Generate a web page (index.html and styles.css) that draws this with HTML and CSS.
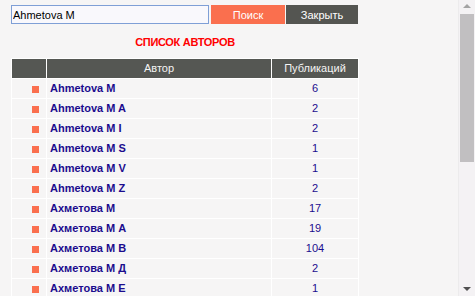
FILE: index.html
```html
<!DOCTYPE html>
<html lang="ru">
<head>
    <meta charset="UTF-8">
    <title>Список авторов</title>
    <link rel="stylesheet" href="styles.css">
</head>
<body>
    <div class="wrap">
        <form class="search">
            <input type="text" class="search-input" value="Ahmetova M" autofocus>
            <button type="button" class="btn btn-find">Поиск</button>
            <button type="button" class="btn btn-close">Закрыть</button>
        </form>

        <div class="title">СПИСОК АВТОРОВ</div>

        <table class="authors">
            <tr>
                <th class="mark"></th>
                <th>Автор</th>
                <th class="num">Публикаций</th>
            </tr>
            <tr><td class="mark"><span class="dot"></span></td><td><a href="#">Ahmetova M</a></td><td class="num">6</td></tr>
            <tr><td class="mark"><span class="dot"></span></td><td><a href="#">Ahmetova M A</a></td><td class="num">2</td></tr>
            <tr><td class="mark"><span class="dot"></span></td><td><a href="#">Ahmetova M I</a></td><td class="num">2</td></tr>
            <tr><td class="mark"><span class="dot"></span></td><td><a href="#">Ahmetova M S</a></td><td class="num">1</td></tr>
            <tr><td class="mark"><span class="dot"></span></td><td><a href="#">Ahmetova M V</a></td><td class="num">1</td></tr>
            <tr><td class="mark"><span class="dot"></span></td><td><a href="#">Ahmetova M Z</a></td><td class="num">2</td></tr>
            <tr><td class="mark"><span class="dot"></span></td><td><a href="#">Ахметова М</a></td><td class="num">17</td></tr>
            <tr><td class="mark"><span class="dot"></span></td><td><a href="#">Ахметова М А</a></td><td class="num">19</td></tr>
            <tr><td class="mark"><span class="dot"></span></td><td><a href="#">Ахметова М В</a></td><td class="num">104</td></tr>
            <tr><td class="mark"><span class="dot"></span></td><td><a href="#">Ахметова М Д</a></td><td class="num">2</td></tr>
            <tr><td class="mark"><span class="dot"></span></td><td><a href="#">Ахметова М Е</a></td><td class="num">1</td></tr>
        </table>
    </div>

    <!-- scrollbar of the frame -->
    <div class="scrollbar">
        <div class="arrow arrow-up"></div>
        <div class="thumb"></div>
        <div class="arrow arrow-down"></div>
    </div>
</body>
</html>
```

FILE: styles.css
```css
html, body {
    height: 296px;
    overflow: hidden;
}

body {
    margin: 0;
    background-color: #f6f5f5;
    font-family: "Liberation Sans", Arial, sans-serif;
    font-size: 11px;
}

.wrap {
    width: 348px;
    padding: 5px 0 0 11px;
}

.search {
    display: flex;
    gap: 2px;
    height: 19px;
    margin: 0;
}

.search-input {
    width: 198px;
    height: 19px;
    box-sizing: border-box;
    margin: 0;
    padding: 0 1px;
    border: 1px solid #7f9fd6;
    outline: none;
    background-color: #f9f8fc;
    font-family: "Liberation Sans", Arial, sans-serif;
    font-size: 11px;
    color: #000;
}

.btn {
    height: 19px;
    margin: 0;
    padding: 0;
    border: none;
    color: #fff;
    font-family: "Liberation Sans", Arial, sans-serif;
    font-size: 11px;
}

.btn-find {
    width: 74px;
    background-color: #fa6f4e;
}

.btn-close {
    width: 72px;
    margin-left: -1px;
    background-color: #545551;
}

.title {
    margin: 12px 0 10px;
    line-height: 12px;
    text-align: center;
    color: #ff0000;
    font-weight: bold;
    letter-spacing: -0.3px;
}

.authors {
    width: 348px;
    border-collapse: collapse;
}

.authors th,
.authors td {
    height: 19px;
    padding: 0 3px;
    border: 1px solid #fff;
    line-height: 13px;
}

.authors th {
    background-color: #555753;
    color: #f4f4f4;
    font-weight: normal;
}

.authors th.mark,
.authors td.mark {
    width: 34px;
    padding: 0;
    text-align: right;
}

.authors th.num,
.authors td.num {
    width: 80px;
    text-align: center;
}

.authors td.num {
    color: #1b0c8e;
}

.dot {
    display: inline-block;
    width: 7px;
    height: 7px;
    margin-right: 7px;
    background-color: #fa6f4e;
    vertical-align: middle;
}

.authors a {
    color: #1b0c8e;
    font-weight: bold;
    text-decoration: none;
}

.scrollbar {
    position: fixed;
    top: 0;
    right: 0;
    width: 17px;
    height: 296px;
    background-color: #f4f2f4;
    border-left: 1px solid #ecebec;
    box-sizing: border-box;
}

.thumb {
    position: absolute;
    top: 14px;
    left: 1px;
    width: 14px;
    height: 148px;
    background-color: #c1bfc1;
}

.arrow {
    position: absolute;
    left: 4px;
    width: 0;
    height: 0;
    border-left: 4px solid transparent;
    border-right: 4px solid transparent;
}

.arrow-up {
    top: 4px;
    border-bottom: 4px solid #a3a3a3;
}

.arrow-down {
    bottom: 5px;
    border-top: 4px solid #505050;
}
```
